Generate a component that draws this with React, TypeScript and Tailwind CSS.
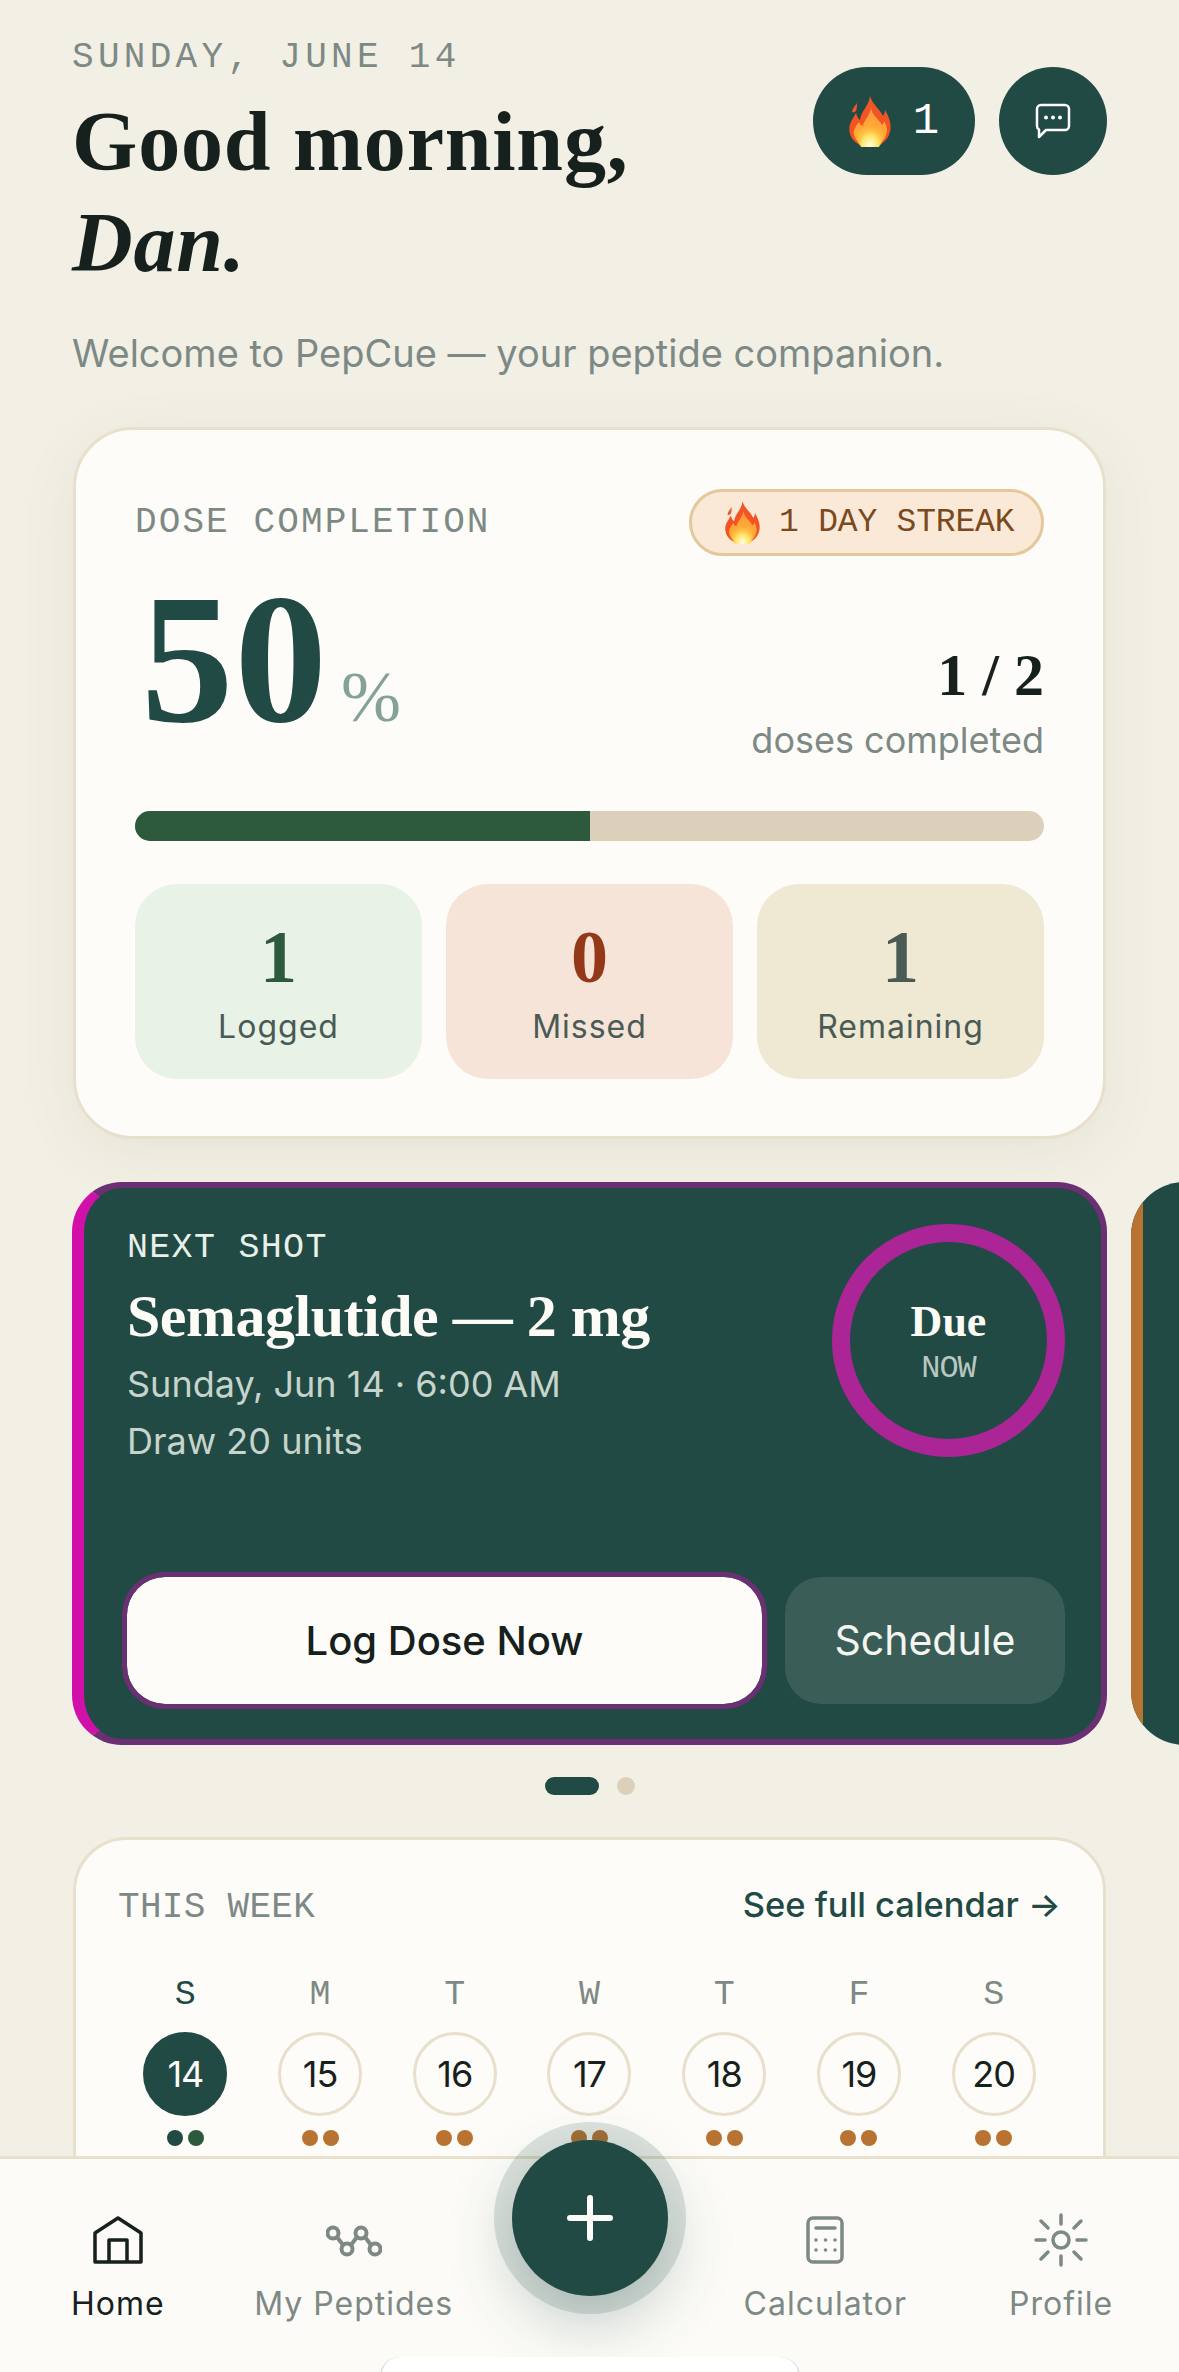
const serif = "font-['Liberation_Serif',serif]";
const sans = "font-['Inter',sans-serif]";
const mono = "font-['Liberation_Mono',monospace]";

function Flame({ className }: { className: string }) {
  return (
    <svg viewBox="0 0 42 51" className={className}>
      <defs>
        <linearGradient id="flameOuter" x1="0" y1="0" x2="0" y2="1">
          <stop offset="0" stopColor="#f0562a" />
          <stop offset="1" stopColor="#f4511e" />
        </linearGradient>
        <linearGradient id="flameMid" x1="0" y1="0" x2="0" y2="1">
          <stop offset="0" stopColor="#ff9a3c" />
          <stop offset="1" stopColor="#ffb030" />
        </linearGradient>
        <radialGradient id="flameCore" cx="0.5" cy="0.8" r="0.7">
          <stop offset="0" stopColor="#fffde0" />
          <stop offset="0.45" stopColor="#ffe566" />
          <stop offset="1" stopColor="#ffb030" stopOpacity="0.2" />
        </radialGradient>
      </defs>
      <path d="M3 16c0-3 3-6 5-9 0 3 0 6-1 8-1 1-3 2-4 1z" fill="#f0562a" />
      <path d="M21 0c2 8 9 12 13 20 1-2 2-3 2-6 4 7 7 14 5 22-2 9-11 15-20 15C11 51 2 45 .6 36-1 28 4 23 7 17c1 3 2 6 4 7 1-9 9-14 10-24z" fill="url(#flameOuter)" />
      <path d="M22 12c1 7 7 10 11 17 1-1 2-2 2-4 3 5 4 10 2 14-2 7-9 11-16 11-8 0-14-4-16-11-1-5 2-9 5-13 1 2 2 4 4 4 1-6 7-11 8-18z" fill="url(#flameMid)" />
      <ellipse cx="21" cy="40" rx="13" ry="15" fill="url(#flameCore)" />
    </svg>
  );
}

function Stat({ n, label, bg, color }: { n: string; label: string; bg: string; color: string }) {
  return (
    <div className={`flex h-[195px] flex-col items-center rounded-[42px] ${bg}`}>
      <div className={`${serif} ${color} mt-[31px] h-[84px] text-[74px] font-bold leading-[84px]`}>{n}</div>
      <div className={`${sans} mt-[6px] text-[32px] leading-[44px] tracking-[1px] text-[#4a5a55]`}>{label}</div>
    </div>
  );
}

const days = [
  ["S", "14"],
  ["M", "15"],
  ["T", "16"],
  ["W", "17"],
  ["T", "18"],
  ["F", "19"],
  ["S", "20"],
];

function HomeIcon() {
  return (
    <svg width="50" height="48" viewBox="0 0 50 48" fill="none" stroke="#16201d" strokeWidth="3.5" strokeLinejoin="round">
      <path d="M2 46V17L25 2l23 15v29z" />
      <path d="M16 46V24h18v22" />
    </svg>
  );
}

function PeptideIcon() {
  return (
    <svg width="56" height="33" viewBox="0 0 56 33" fill="none" stroke="#7d8985" strokeWidth="4" strokeLinecap="round">
      <circle cx="7" cy="9" r="5.5" />
      <circle cx="21" cy="25" r="5.5" />
      <circle cx="35" cy="9" r="5.5" />
      <circle cx="49" cy="25" r="5.5" />
      <path d="M11 13l6 8M25 21l6-8M39 13l6 8" />
    </svg>
  );
}

function CalcIcon() {
  return (
    <svg width="38" height="48" viewBox="0 0 38 48" fill="none" stroke="#7d8985" strokeWidth="3.5" strokeLinecap="round">
      <rect x="2" y="2" width="34" height="44" rx="5" />
      <path d="M10 12h19" />
      <g fill="#7d8985" stroke="none">
        <circle cx="10" cy="24" r="1.8" />
        <circle cx="19.5" cy="24" r="1.8" />
        <circle cx="29" cy="24" r="1.8" />
        <circle cx="10" cy="34" r="1.8" />
        <circle cx="19.5" cy="34" r="1.8" />
        <circle cx="29" cy="34" r="1.8" />
      </g>
    </svg>
  );
}

function SunIcon() {
  return (
    <svg width="54" height="54" viewBox="0 0 54 54" fill="none" stroke="#7d8985" strokeWidth="3.5" strokeLinecap="round">
      <circle cx="27" cy="27" r="8" />
      <path d="M27 2v9M27 43v9M2 27h9M43 27h9M7 8l7 7M47 8l-7 7M7 46l7-7M47 46l-7-7" />
    </svg>
  );
}

function NavItem({ label, active, icon }: { label: string; active?: boolean; icon: React.ReactNode }) {
  return (
    <div className="flex flex-col items-center">
      <div className="flex h-[54px] items-center justify-center">{icon}</div>
      <div className={`${sans} mt-[15px] text-[32px] leading-[44px] tracking-[1px] ${active ? "text-[#16201d]" : "text-[#7d8985]"}`}>{label}</div>
    </div>
  );
}

export default function App() {
  return (
    <div className="relative h-[2372px] w-[1179px] overflow-hidden bg-[#f2efe4]">
      <header className="flex items-start justify-between px-[72px] pt-[36px]">
        <div>
          <div className={`${mono} text-[36px] leading-[44px] tracking-[4.3px] text-[#7d8985]`}>SUNDAY, JUNE 14</div>
          <h1 className={`${serif} mt-[11px] text-[84px] font-bold leading-[101px] tracking-[0.8px] text-[#16201d]`}>
            Good morning,
            <br />
            <em>Dan.</em>
          </h1>
        </div>
        <div className="mt-[31px] flex gap-[24px]">
          <div className="flex h-[108px] w-[162px] items-center justify-center gap-[22px] rounded-full bg-[#214a44]">
            <Flame className="h-[51px] w-[42px]" />
            <span className={`${mono} text-[44px] leading-none text-white`}>1</span>
          </div>
          <div className="flex h-[108px] w-[108px] items-center justify-center rounded-full bg-[#214a44]">
            <svg width="36" height="36" viewBox="0 0 36 36" fill="none" stroke="#fff" strokeWidth="2.5" strokeLinejoin="round">
              <path d="M6 2h24a4 4 0 0 1 4 4v17a4 4 0 0 1-4 4H11l-7 7v-7.5A4 4 0 0 1 2 23V6a4 4 0 0 1 4-4z" />
              <g fill="#fff" stroke="none">
                <circle cx="11" cy="14.5" r="2" />
                <circle cx="18" cy="14.5" r="2" />
                <circle cx="25" cy="14.5" r="2" />
              </g>
            </svg>
          </div>
        </div>
      </header>
      <p className={`${sans} mt-[32px] px-[72px] text-[38px] leading-[56px] text-[#7d8985]`}>Welcome to PepCue — your peptide companion.</p>

      <main>
        <section className="mx-[73px] mt-[46px] rounded-[60px] border-[3px] border-[#e8e0cc] bg-[#fdfcf8] px-[59px] pb-[57px] pt-[59px] shadow-[0_14px_60px_rgba(90,80,50,0.07)]">
          <div className="flex h-[67px] items-center justify-between">
            <span className={`${mono} text-[36px] leading-[46px] tracking-[2.1px] text-[#7d8985]`}>DOSE COMPLETION</span>
            <span className="flex h-[67px] w-[355px] items-center gap-[19px] rounded-full border-[3px] border-[#e4c89c] bg-[#fbe9d8] pl-[33px]">
              <Flame className="h-[43px] w-[35px]" />
              <span className={`${mono} text-[33px] tracking-[-0.2px] text-[#7a4a1e]`}>1 DAY STREAK</span>
            </span>
          </div>
          <div className="flex h-[207px] items-start justify-between">
            <div className="ml-[6px] mt-[10px] flex items-baseline">
              <span className={`${serif} text-[185px] font-bold leading-[185px] tracking-[1px] text-[#214a44]`}>50</span>
              <span className={`${serif} ml-[13px] text-[72px] leading-none text-[#85a298]`}>%</span>
            </div>
            <div className="mt-[89px] flex flex-col items-end">
              <div className={`${serif} text-[60px] font-bold leading-[60px] text-[#16201d]`}>1 / 2</div>
              <div className={`${sans} mt-[12px] text-[36px] leading-[46px] text-[#7d8985]`}>doses completed</div>
            </div>
          </div>
          <div className="mt-[48px] h-[30px] overflow-hidden rounded-full bg-[#ddd0bb]">
            <div className="h-full w-1/2 bg-[#2d5a3d]" />
          </div>
          <div className="mt-[43px] grid grid-cols-3 gap-[24px]">
            <Stat n="1" label="Logged" bg="bg-[#e9f2e7]" color="text-[#2d5a3d]" />
            <Stat n="0" label="Missed" bg="bg-[#f6e4d8]" color="text-[#93391a]" />
            <Stat n="1" label="Remaining" bg="bg-[#efe9d4]" color="text-[#4a5a55]" />
          </div>
        </section>

        <section className="mt-[43px] flex gap-[24px] overflow-hidden px-[72px]">
          <div className="flex h-[563px] w-[1035px] shrink-0 flex-col rounded-[50px] border-[6px] border-l-[12px] border-[#6b2f73] border-l-[#d010a8] bg-[#214a44] pb-[35px] pl-[43px] pr-[36px] pt-[42px]">
            <div className="flex items-start justify-between">
              <div>
                <div className={`${mono} text-[35px] leading-[36px] tracking-[1.3px] text-[#e9efe9]`}>NEXT SHOT</div>
                <div className={`${serif} mt-[15px] text-[60px] font-bold leading-[70px] tracking-[-0.5px] text-[#fcfbf6]`}>Semaglutide — 2 mg</div>
                <div className={`${sans} mt-[8px] text-[36px] leading-[50px] text-[#c6d4cc]`}>Sunday, Jun 14 · 6:00 AM</div>
                <div className={`${sans} mt-[7px] text-[36px] leading-[50px] text-[#c6d4cc]`}>Draw 20 units</div>
              </div>
              <div className="-mt-[6px] flex h-[233px] w-[233px] flex-col items-center justify-center rounded-full border-[18px] border-[#ac2596]">
                <div className={`${serif} text-[44px] font-bold leading-[52px] text-[#fcfbf6]`}>Due</div>
                <div className={`${mono} mt-[5px] text-[32px] leading-[32px] tracking-[-1px] text-[#b7c7c0]`}>NOW</div>
              </div>
            </div>
            <div className="mt-auto flex gap-[23px]">
              <div className={`${sans} flex h-[127px] w-[635px] items-center justify-center rounded-[38px] bg-[#fdfcf8] text-[40px] font-medium text-[#16201d] outline-[5px] outline-[#6b2f73]`}>Log Dose Now</div>
              <div className={`${sans} flex h-[127px] flex-1 items-center justify-center rounded-[36px] bg-[#3a5d58] text-[41px] text-[#f4f5ef]`}>Schedule</div>
            </div>
          </div>
          <div className="relative h-[563px] w-[1035px] shrink-0 overflow-hidden rounded-[54px] bg-[#214a44]">
            <div className="absolute inset-y-0 left-0 w-[12px] bg-[#b87333]" />
          </div>
        </section>

        <div className="mt-[32px] flex justify-center gap-[18px]">
          <div className="h-[18px] w-[54px] rounded-full bg-[#214a44]" />
          <div className="h-[18px] w-[18px] rounded-full bg-[#ddd0bb]" />
        </div>

        <section className="mx-[73px] mt-[42px] h-[500px] rounded-[54px] border-[3px] border-[#e8e0cc] bg-[#fdfcf8] px-[42px] pt-[43px]">
          <div className="flex h-[44px] items-center justify-between">
            <span className={`${mono} mt-[5px] text-[36px] tracking-[0.3px] text-[#7d8985]`}>THIS WEEK</span>
            <span className={`${sans} text-[34.5px] font-medium text-[#214a44]`}>See full calendar →</span>
          </div>
          <div className="mt-[50px] grid grid-cols-7">
            {days.map(([d, n], i) => (
              <div key={n} className="flex flex-col items-center">
                <div className={`${mono} text-[35px] leading-[36px] ${i === 0 ? "text-[#214a44]" : "text-[#7d8985]"}`}>{d}</div>
                <div className={`${sans} mt-[19px] flex h-[84px] w-[84px] items-center justify-center rounded-full border-[3px] text-[36px] tracking-[-1px] ${i === 0 ? "border-[#214a44] bg-[#214a44] text-[#fdfcf8]" : "border-[#e8e0cc] text-[#16201d]"}`}>{n}</div>
                <div className="mt-[14px] flex gap-[5px]">
                  <div className={`h-[16px] w-[16px] rounded-full ${i === 0 ? "bg-[#214a44]" : "bg-[#b87333]"}`} />
                  <div className={`h-[16px] w-[16px] rounded-full ${i === 0 ? "bg-[#2d5a3d]" : "bg-[#b87333]"}`} />
                </div>
              </div>
            ))}
          </div>
        </section>
      </main>

      <nav className="absolute inset-x-0 bottom-0 h-[216px] border-t-[3px] border-[#e8e0cc] bg-[#fcfbf7] pt-[54px]">
        <div className="grid grid-cols-5">
          <NavItem label="Home" active icon={<HomeIcon />} />
          <NavItem label="My Peptides" icon={<PeptideIcon />} />
          <div />
          <NavItem label="Calculator" icon={<CalcIcon />} />
          <NavItem label="Profile" icon={<SunIcon />} />
        </div>
      </nav>

      <div className="absolute left-[512px] top-[2140px] flex h-[156px] w-[156px] items-center justify-center rounded-full bg-[#214a44] shadow-[0_0_0_18px_rgba(33,74,68,0.15),0_24px_64px_rgba(33,74,68,0.28)]">
        <svg width="46" height="46" viewBox="0 0 46 46" fill="none" stroke="#fdfcf8" strokeWidth="6" strokeLinecap="round">
          <path d="M23 3v40M3 23h40" />
        </svg>
      </div>
      <div className="absolute left-[380px] top-[2357px] h-[40px] w-[420px] rounded-[20px] border-x border-[#c9c9c9] bg-white" />
    </div>
  );
}
